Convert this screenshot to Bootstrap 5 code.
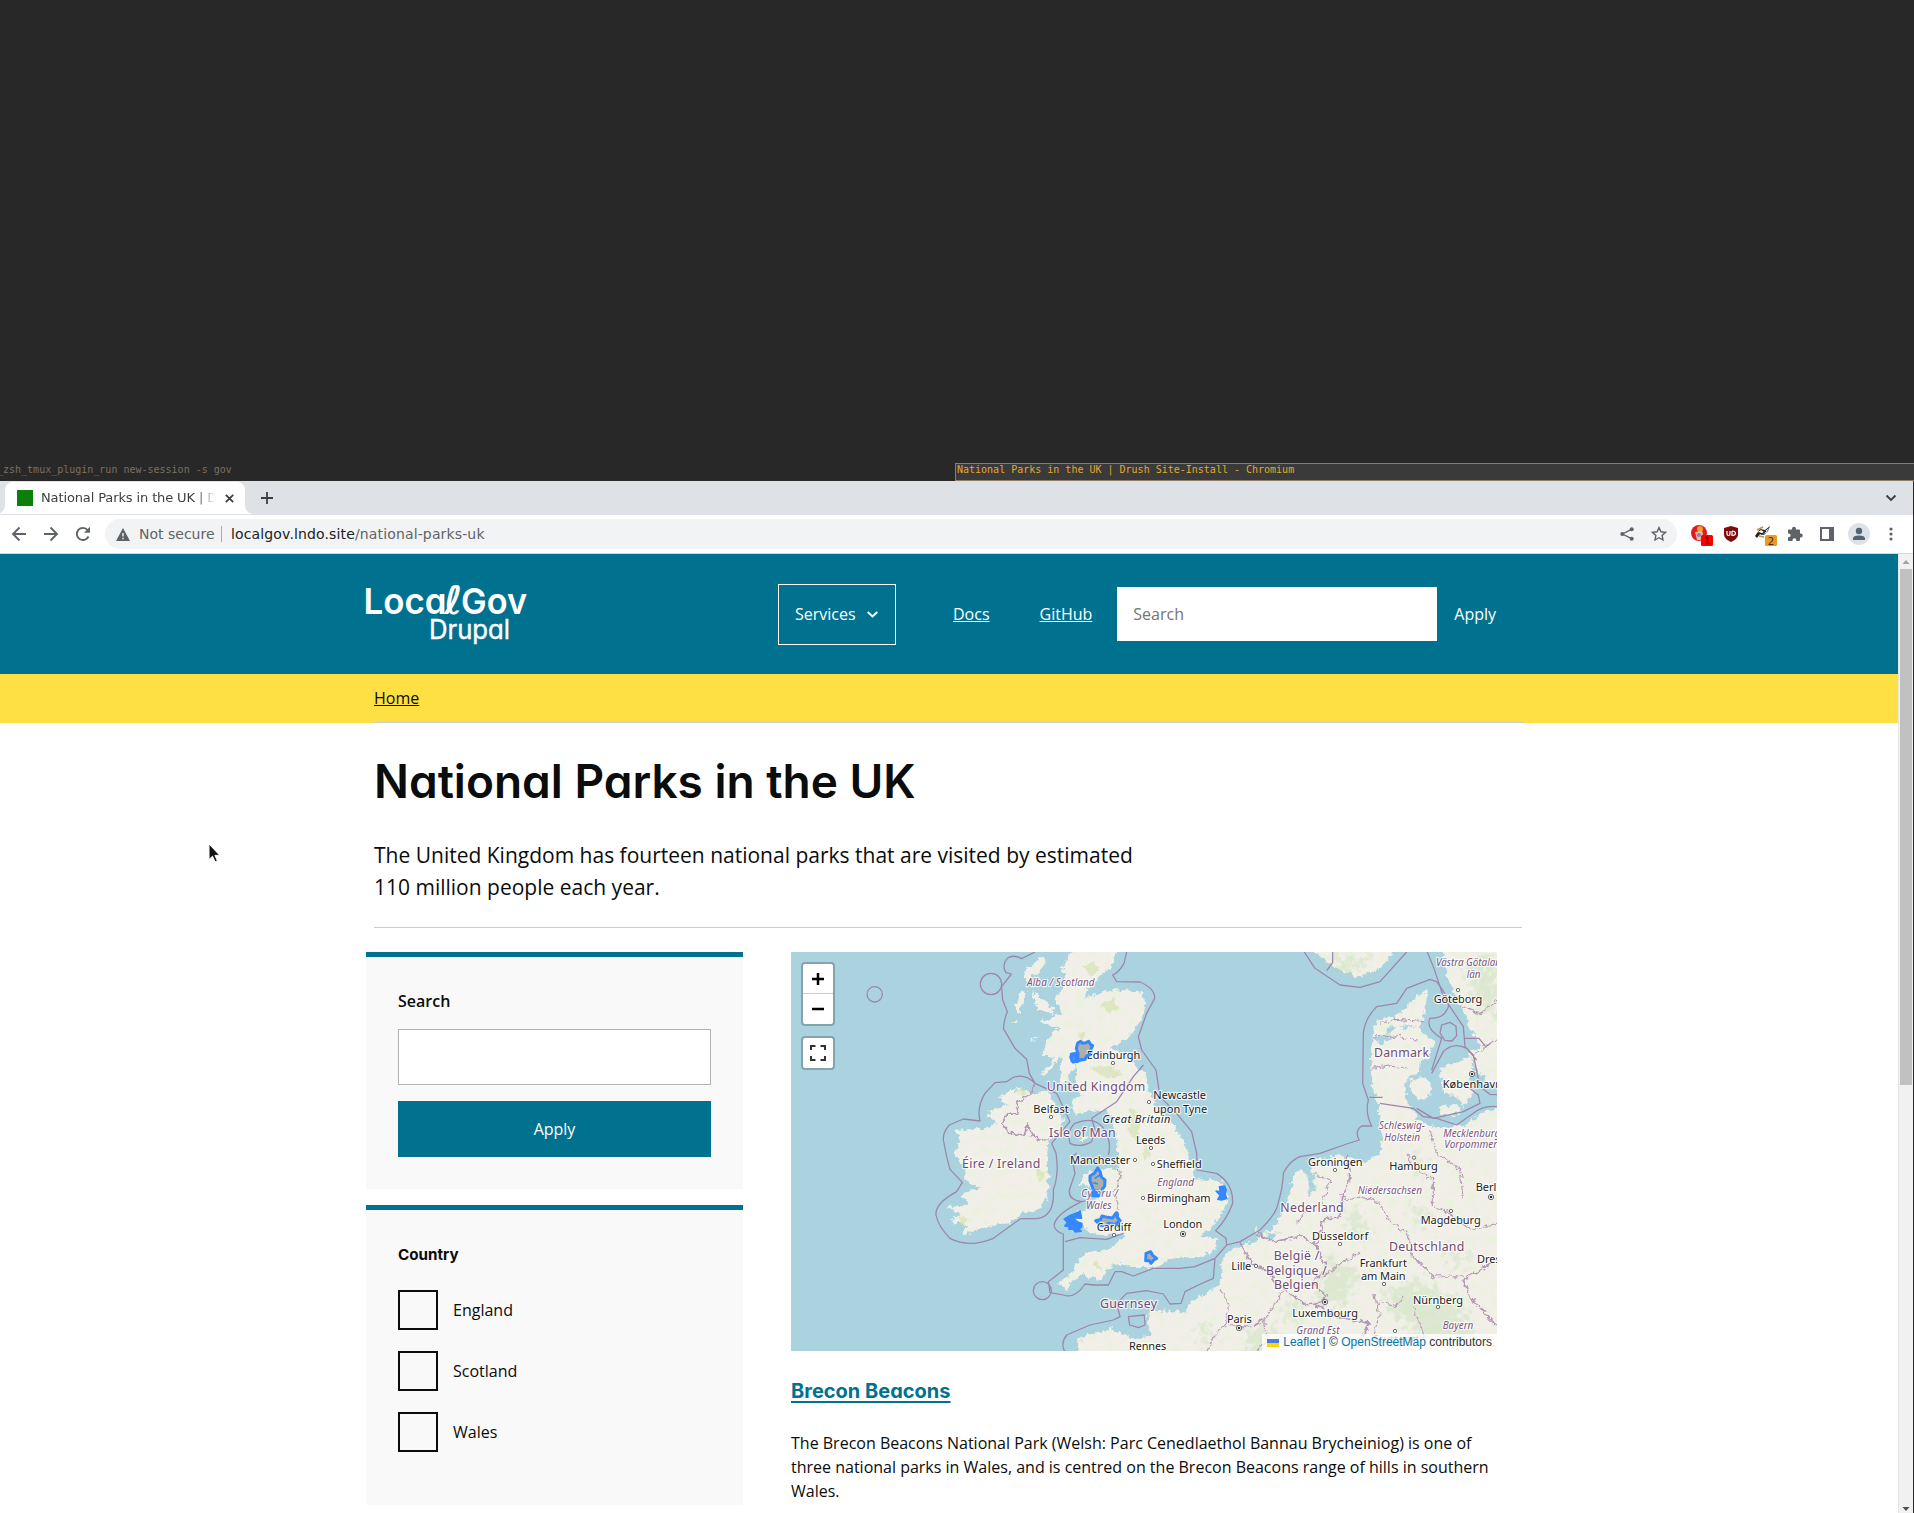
<!DOCTYPE html>
<html lang="en">
<head>
<meta charset="utf-8">
<title>National Parks in the UK | Drush Site-Install</title>
<link href="https://cdn.jsdelivr.net/npm/bootstrap@5.3.0/dist/css/bootstrap.min.css" rel="stylesheet">
<style>
:root{--teal:#00728f}
body{width:1914px;height:1513px;overflow:hidden;background:#282828;font-family:"Open Sans",sans-serif;font-size:16px;line-height:24px;color:#0b0c0c}
svg{display:block;flex:none}
.wm{height:481px;padding-top:463px;font:10px/16px "DejaVu Sans Mono",monospace;color:#7c6f64}
.wm-left{width:955px;height:18px;line-height:14px;text-indent:-3px}
.wm-title{height:18px;background:#3a3a3a;border:1px solid #8f7d6c;border-right:0;color:#e2a92e;line-height:12px;padding-left:1px}
.win{width:1913px;height:1032px;background:#fff}
.tabs{height:34px;background:#dee1e6;font:13px/34px "DejaVu Sans",sans-serif}
.tab-on{width:240px;margin-left:5px;background:#fff;border-radius:8px 8px 0 0;padding:0 11px 0 12px;color:#3c4043;position:relative}
.tab-on:before,.tab-on:after{content:"";position:absolute;bottom:0;width:8px;height:8px}
.tab-on:before{left:-8px;background:radial-gradient(circle at 0 0,transparent 7.5px,#fff 8px)}
.tab-on:after{right:-8px;background:radial-gradient(circle at 100% 0,transparent 7.5px,#fff 8px)}
.fav{width:16px;height:16px;background:#0a800a}
.tab-text{width:176px;height:32px;line-height:32px;margin-left:8px;font-size:13px;overflow:hidden;white-space:nowrap;letter-spacing:-.12px;-webkit-mask-image:linear-gradient(90deg,#000 155px,transparent 175px)}
.bar{height:39px;border-bottom:1px solid #d5d8dc;color:#5f6368;font:14px/30px "DejaVu Sans",sans-serif;padding-left:11px}
.omni{width:1572px;height:30px;border-radius:15px;background:#f1f3f4;margin-left:14px;padding:0 10px 0 11px}
.omni .host{color:#202124}
.top{height:120px;background:var(--teal);color:#fff}
.logo{width:160px;height:62px;margin-left:366px;overflow:visible}
.svc{width:118px;height:61px;border:1px solid #fff;margin-left:252px;padding:0 17px 0 16px}
.top a{color:#fff}
.q{width:320px;height:54px;border:0;border-radius:0;padding:0 16px;margin-left:25px}
.q::placeholder{color:#757575;opacity:1}
.crumb{height:49px;background:#ffe044;padding:12px 0 0 374px}
.crumb a{color:#0b0c0c}
.crumb div{width:1149px;height:37px;border-bottom:1px solid #cdcdc8}
.inner{width:1148px;margin-left:374px}
h1{font:600 46px/58px Inter,sans-serif;font-feature-settings:"cv11";margin:0}
.lede{font-size:21px;line-height:32px;margin:0}
.side{width:377px;margin-left:366px}
.facet{background:#f9f9f9;border-top:5px solid var(--teal);padding:32px}
.lab{font-weight:600}
.lab2{font:700 15.2px/24px Inter,sans-serif;font-feature-settings:"cv11"}
.inp{height:56px;border:1px solid #b1b4b6;border-radius:0}
.go{height:56px;border:0;border-radius:0;background:var(--teal);color:#fff}
.chk{width:40px;height:40px;border:2px solid #0b0c0c}
.res{width:706px;margin-left:48px}
.mapbox{height:399px;position:relative;overflow:hidden;background:#aad3df}
.ctl{position:absolute;left:10px;border:2px solid #83a4ad;border-radius:4px;background:#fff;width:34px}
.ctl svg{margin:auto}
.attr{position:absolute;right:0;bottom:0;height:17px;padding:0 5px;background:rgba(255,255,255,.8);font:12px/16.8px "Liberation Sans",sans-serif;color:#333}
.attr a{color:#0078a8;text-decoration:none}
h2{font:700 20px/28px Inter,sans-serif;font-feature-settings:"cv11";margin:0}
h2 a{color:var(--teal);text-decoration-thickness:2px;text-underline-offset:3px}
.sb{width:15px;background:#f1f1f1;border-left:1px solid #e6e6e6}
.ptr{position:absolute;left:208px;top:843px}
.t text{font-family:"Noto Sans",sans-serif;paint-order:stroke;stroke:#fff;stroke-opacity:.75;stroke-width:7px;stroke-linejoin:round}
.city{fill:#222;font-size:33px}.land{fill:#734a74;font-size:37px}.reg{fill:#7d5580;font-size:30px;font-style:italic}
</style>
<script src="https://cdn.jsdelivr.net/npm/bootstrap@5.3.0/dist/js/bootstrap.bundle.min.js"></script>
</head>
<body>
<div class="wm d-flex"><div class="wm-left">_zsh_tmux_plugin_run new-session -s gov</div><div class="wm-title flex-grow-1">National Parks in the UK | Drush Site-Install - Chromium</div></div>
<div class="win d-flex flex-column">
<div class="tabs d-flex align-items-center">
  <div class="tab-on d-flex align-items-center"><div class="fav"></div><div class="tab-text">National Parks in the UK | Drush</div>
    <svg class="ms-auto" width="9" height="9" viewBox="0 0 9 9" stroke="#3c4043" stroke-width="1.8"><path d="M.8.8l7.4 7.4M8.2.8L.8 8.2"/></svg></div>
  <svg class="ms-3" width="12" height="12" viewBox="0 0 12 12" stroke="#3c4043" stroke-width="1.8"><path d="M6 0v12M0 6h12"/></svg>
  <svg class="ms-auto me-3" width="12" height="8" viewBox="0 0 12 8" fill="none" stroke="#3c4043" stroke-width="1.9"><path d="M1.5 1.5L6 6l4.500-4.500"/></svg>
</div>
<div class="bar d-flex align-items-center">
  <svg width="16" height="16" viewBox="0 0 16 16" fill="none" stroke="#5f6368" stroke-width="1.9"><path d="M15 8H2.500M8.500 1.500L2 8l6.500 6.500"/></svg>
  <svg style="margin-left:16px" width="16" height="16" viewBox="0 0 16 16" fill="none" stroke="#5f6368" stroke-width="1.9"><path d="M1 8h12.500M7.500 1.500L14 8l-6.500 6.500"/></svg>
  <svg style="margin-left:16px" width="16" height="16" viewBox="0 0 16 16" fill="none" stroke="#5f6368" stroke-width="1.9"><path d="M13.500 10.500A6.100 6.100 0 1 1 12.600 4L14 5.500"/><path d="M15 .8v6H9z" fill="#5f6368" stroke="none"/></svg>
  <div class="omni d-flex align-items-center">
    <svg width="14" height="13" viewBox="0 0 14 13"><path d="M7 0l7 13H0z" fill="#5f6368"/><path d="M7 5v3.500M7 9.700v1.500" stroke="#f1f3f4" stroke-width="1.4"/></svg>
    <span style="margin-left:9px;width:82px">Not secure</span><span style="width:1px;height:16px;background:#a9adb1;margin-right:9px"></span>
    <span style="letter-spacing:.14px"><span class="host">localgov.lndo.site</span>/national-parks-uk</span>
    <svg class="ms-auto" width="14" height="14" viewBox="0 0 14 14"><path d="M12 2.200L2.500 7l9.500 4.800" fill="none" stroke="#5f6368" stroke-width="1.400"/><circle cx="11.700" cy="2.200" r="2" fill="#5f6368"/><circle cx="2.300" cy="7" r="2" fill="#5f6368"/><circle cx="11.700" cy="11.800" r="2" fill="#5f6368"/></svg>
    <svg style="margin-left:17px" width="16" height="16" viewBox="0 0 16 16" fill="none" stroke="#5f6368" stroke-width="1.400"><path d="M8 1.600l1.900 4.200 4.600.5-3.400 3.100.9 4.600L8 11.700 4 14l.9-4.600L1.500 6.300l4.600-.5z"/></svg>
  </div>
  <svg style="margin-left:13px" width="24" height="24" viewBox="0 0 24 24"><circle cx="9" cy="11" r="8" fill="#e31b1b"/><circle cx="10" cy="7" r="3" fill="#e9a23a"/><path d="M5 10l7-1 1 3-2 6H7z" fill="#f0b5a8"/><circle cx="9" cy="13" r="2" fill="#8a7fa8"/><rect x="11" y="13" width="12" height="11" rx="1.500" fill="#f00"/><path d="M15.500 15.500h2v6m-2 0h4" stroke="#600" stroke-width="1.400" fill="none"/></svg>
  <svg style="margin-left:9px" width="16" height="16" viewBox="0 0 16 16"><path d="M8 0l7 2v6c0 4-3 6-7 8-4-2-7-4-7-8V2z" fill="#800b0b"/><path d="M4 5v3q0 1.500 1.500 1.500T7 8V5m2 0v4.500q3.500 0 3.500-2.200T9 5" fill="none" stroke="#fff" stroke-width="1.200"/></svg>
  <svg style="margin-left:15px" width="24" height="24" viewBox="0 0 24 24"><path d="M1 14L6 7l5 1 5-4-2 5-4 4-4-1-3 4z" fill="#222"/><path d="M4 10l3-2 3 2 5-4-3 5-3 1z" fill="#fff"/><path d="M5 11l3 1 4-3" stroke="#222" stroke-width="1.500" fill="none"/><path d="M3 8l6-3M5 14l5 1" stroke="#c58a4c" stroke-width="1.500"/><rect x="11" y="13" width="12" height="11" rx="1.500" fill="#e99a24"/><text x="17" y="22.500" text-anchor="middle" font-size="10" fill="#4a2b00">2</text></svg>
  <svg style="margin-left:9px" width="16" height="16" viewBox="0 0 16 16" fill="#5f6368"><path d="M1 4.500q0-1 1-1h3V2.800a2 2 0 0 1 4 0v.7h3q1 0 1 1v3h.8a1.900 1.900 0 0 1 0 3.900H13V14q0 1-1 1H9.300v-.8a1.900 1.900 0 0 0-3.800 0v.8H2q-1 0-1-1v-2.800h.7a1.900 1.900 0 0 0 0-3.800H1z"/></svg>
  <svg style="margin-left:17px" width="14" height="14" viewBox="0 0 14 14"><path d="M1 1h12v12H1z" fill="#fff" stroke="#5f6368" stroke-width="2"/><path d="M9 1h4v12H9z" fill="#5f6368"/></svg>
  <svg style="margin-left:14px" width="22" height="22" viewBox="0 0 22 22"><circle cx="11" cy="11" r="11" fill="#dee1e6"/><circle cx="11" cy="8" r="3.200" fill="#4f6474"/><path d="M5 17v-1.500q0-3 6-3t6 3V17z" fill="#4f6474"/></svg>
  <svg style="margin-left:19px" width="4" height="14" viewBox="0 0 4 14" fill="#5f6368"><circle cx="2" cy="2" r="1.600"/><circle cx="2" cy="7" r="1.600"/><circle cx="2" cy="12" r="1.600"/></svg>
</div>
<div class="d-flex flex-grow-1 overflow-hidden">
<div class="flex-grow-1">
  <header class="top d-flex align-items-center">
    <svg class="logo" viewBox="0 0 160 62" fill="#fff" font-family="Inter,sans-serif" style="font-feature-settings:'cv11'"><text y="30.500" font-size="35.500" font-weight="600"><tspan x="-2.500" textLength="83" lengthAdjust="spacingAndGlyphs">Loca</tspan><tspan x="78" font-family="DejaVu Sans" font-weight="700" font-size="39">ℓ</tspan><tspan x="95" textLength="66" lengthAdjust="spacingAndGlyphs">Gov</tspan></text><text x="63" y="55.500" font-size="26.500" font-weight="400" stroke="#fff" stroke-width=".4" textLength="81" lengthAdjust="spacingAndGlyphs">Drupal</text></svg>
    <div class="svc d-flex align-items-center justify-content-between"><span>Services</span><svg width="11" height="7" viewBox="0 0 11 7" fill="none" stroke="#fff" stroke-width="2"><path d="M.7 1l4.800 4.500L10.300 1"/></svg></div>
    <a href="#" style="margin-left:57px">Docs</a><a href="#" style="margin-left:50px">GitHub</a>
    <input class="q" placeholder="Search"><span style="margin-left:17px">Apply</span>
  </header>
  <nav class="crumb"><div><a href="#">Home</a></div></nav>
  <div class="inner">
    <h1 style="padding-top:29px">National Parks in the UK</h1>
    <p class="lede" style="padding-top:29px">The United Kingdom has fourteen national parks that are visited by estimated<br>110 million people each year.</p>
    <div style="height:25px;border-bottom:1px solid #ccc"></div>
  </div>
  <div class="d-flex" style="padding-top:24px">
    <aside class="side">
      <div class="facet" style="height:237px"><div class="lab">Search</div><input class="inp w-100 d-block" style="margin-top:16px"><button class="go w-100 d-block" style="margin-top:16px">Apply</button></div>
      <div class="facet" style="height:300px;margin-top:16px"><div class="lab2" style="padding-top:1px">Country</div>
        <div class="d-flex align-items-center" style="margin-top:23px"><span class="chk"></span><span style="margin-left:15px">England</span></div>
        <div class="d-flex align-items-center" style="margin-top:21px"><span class="chk"></span><span style="margin-left:15px">Scotland</span></div>
        <div class="d-flex align-items-center" style="margin-top:21px"><span class="chk"></span><span style="margin-left:15px">Wales</span></div>
      </div>
    </aside>
    <main class="res">
      <div class="mapbox">
<svg width="706" height="400" viewBox="33 36 2118 1200">
<defs>
<filter id="rough" x="0" y="0" width="100%" height="100%">
<feTurbulence type="fractalNoise" baseFrequency=".06" numOctaves="4" seed="4" result="n"/>
<feDisplacementMap in="SourceGraphic" in2="n" scale="26" xChannelSelector="R" yChannelSelector="G" result="l"/>
<feTurbulence type="fractalNoise" baseFrequency=".045" numOctaves="5" seed="11" result="m"/>
<feColorMatrix in="m" values="0 0 0 0 .82  0 0 0 0 .89  0 0 0 0 .72  4.500 0 0 0 -2.250" result="g"/>
<feComposite in="g" in2="l" operator="in" result="gl"/><feMerge><feMergeNode in="l"/><feMergeNode in="gl"/></feMerge></filter>
<filter id="wob"><feTurbulence type="fractalNoise" baseFrequency=".06" numOctaves="3" seed="7"/><feDisplacementMap in="SourceGraphic" scale="22" xChannelSelector="R" yChannelSelector="G"/></filter>
<filter id="soft" x="-10%" y="-10%" width="120%" height="120%"><feTurbulence type="fractalNoise" baseFrequency=".05" numOctaves="4" seed="9" result="n"/><feGaussianBlur in="SourceGraphic" stdDeviation="9" result="b"/><feDisplacementMap in="b" in2="n" scale="110" xChannelSelector="R" yChannelSelector="G"/></filter>
</defs>
<rect x="33" y="36" width="2118" height="1200" fill="#aad3df"/>
<g filter="url(#rough)" fill="#f2efe9">
<rect x="33" y="36" width="2118" height="1200" fill="none"/>
<path d="M875 30H1008L1000 75 965 105 925 145 912 175 960 160 1000 148 1085 155 1095 185 1085 235 1055 278 1020 310 985 322 1035 345 1060 372 1098 398 1108 455 1138 515 1195 570 1225 645 1243 690 1236 726 1262 718 1325 725 1345 765 1328 820 1290 868 1258 884 1316 896 1308 925 1265 952 1165 960 1130 982 1055 980 1020 968 985 985 962 1022 905 1002 882 1020 862 1048 830 1030 868 1008 908 945 1000 922 1035 880 965 888 920 872 905 845 858 843 905 812 948 792 935 735 895 738 922 700 960 690 1012 685 1015 600 1000 560 1000 535 975 510 930 512 885 525 872 485 905 465 888 425 892 378 868 400 845 440 838 400 845 345 805 400 778 408 825 352 788 345 800 300 838 262 788 248 845 215 822 180 858 130 845 80z"/>
<path d="M715 442L752 460 805 458 848 535 838 580 800 605 806 690 800 780 785 806 722 820 685 850 602 865 550 888 558 856 508 842 542 820 503 805 560 790 545 762 600 742 552 722 562 682 522 650 540 605 530 570 602 566 652 552 618 522 682 492 648 474z"/>
<path d="M795 45L798 75 740 125 732 90zM722 150L738 158 715 225 706 200zM757 155L830 210 815 222 770 205zM765 300L785 285 742 308zM848 395L870 402 862 428zM775 240l18-4-2 12zM700 245l14-10-8 18zM922 698l30-8 4 22-30 8zM898 598l20-14 6 4-20 18z"/>
<path d="M890 1240L892 1200 942 1178 1000 1168 1058 1195 1112 1188 1100 1130 1110 1112 1222 1118 1230 1085 1280 1060 1322 1035 1325 960 1350 932 1392 918 1450 890 1490 850 1530 762 1542 700 1572 690 1590 730 1600 660 1680 645 1750 668 1800 640 1808 590 1795 500 1778 440 1773 330 1775 285 1790 240 1862 222 1900 178 1942 148 1935 220 1918 272 1962 302 1950 345 1918 370 1916 395 1878 420 1882 490 1905 512 1912 542 1970 562 2050 558 2110 515 2160 503V1240z"/>
<path d="M1985 30L2002 110 2040 190 2072 270 2105 316 2066 338 2098 400 2125 432 2160 440V30zM1600 30L1662 80 1730 110 1800 88 1845 30zM1885 420L1930 410 1955 430 1952 465 1920 478 1892 455zM1978 385L2030 370 2070 350 2085 395 2065 415 2080 450 2050 500 2030 470 1990 460zM1970 500L2030 495 2050 510 2020 528 1980 520zM1450 872l50 5-12 14-40-4z"/>
<path fill="#aad3df" d="M1780 292l30-6 20-34 14 8-14 26 20 10-30 4-20 12zM1850 252l22 8 40-4-38 12zM1425 865l50 16 30-4-34 20-40-4zM1592 700l22 18-6 34-20 20-4-40z"/>
</g>
<g filter="url(#wob)" fill="#cddf9f" opacity=".5"><path d="M910 80l30-14 18 20-30 22zM960 195l40-20 20 30-40 12zM890 285l30-12-10 22zM930 380l60-4 40 30-50 10zM1050 500l30 30-10 80-25-40zM1090 590l20 50-20 20zM710 450l25-5-5 30zM770 680l30 15-20 35zM535 825l28 12-14 25zM940 970l20-10 2 40z"/></g>
<g filter="url(#soft)" fill="#b5d9a5" opacity=".33"><path d="M1650 50l130-6-40 50-60-5zM2060 50l90 10v190l-60-60zM1650 950l90 60-60 90-80-20zM1800 1060l120-40 100 60 80 120-160 20zM1880 790l70 30-40 40zM1700 780l80 100-70 20zM1400 1180l60-30 80 80h-140zM1500 1080l70 20-30 60zM1880 640l60 20-20 60zM2000 900l80 60-60 20zM1250 1150l60 20-30 50z"/></g>
<g fill="none" stroke="#9c86ab" stroke-width="3.800" stroke-linejoin="round">
<circle cx="284" cy="163" r="23"/><circle cx="633" cy="132" r="32"/><circle cx="787" cy="1052" r="27"/><path d="M1985 255l25-8 18 12 2 28-14 16-22-2-14-22z"/>
<path d="M765 36L725 56Q700 42 682 55 664 75 678 98L694 102 665 140 668 180 682 215Q672 240 670 265L705 325 740 358 748 400 765 430Q735 400 700 412L680 425 645 428 615 460Q590 500 600 543L550 537 508 555Q488 578 490 600L500 650 510 688 547 727 530 755Q465 790 468 825 475 860 510 895 568 925 640 895L722 836 770 836Q825 830 820 750 838 700 828 640L815 610"/>
<path d="M1040 36L1032 70Q1018 96 998 105L1010 125 1080 126Q1125 145 1124 175L1100 220 1075 290 1085 330 1128 390 1140 470 1190 520 1235 575 1250 640 1252 690 1310 700Q1360 730 1358 790 1340 840 1307 872L1338 895 1340 915 1380 905 1440 870Q1480 830 1490 805 1510 740 1510 700 1530 660 1560 650L1620 640 1700 612 1738 600Q1722 575 1745 558L1775 558Q1755 520 1765 480L1748 430 1750 280Q1755 235 1790 200L1850 190 1880 145 1950 118 1970 125Q2020 190 2000 210 1990 235 1950 235 1935 265 1985 295L1955 390"/>
<path d="M1340 915L1305 955 1300 1015 1255 1035 1215 1055 1203 1090 1170 1092 1150 1062 1100 1052 1040 1060 1010 1090 1020 1130 1000 1140 930 1155 860 1185Q840 1210 855 1236M1305 955L1245 980 1200 985 1120 985 1060 1008 1025 995 1005 995 985 1035 940 1035 915 1032Q885 1078 850 1065L810 1058 805 1025 850 990V882Q825 875 822 855 830 820 905 785L928 780M905 785Q865 780 868 750L885 700 875 650 890 640M985 645Q995 610 975 570 945 525 885 550 860 570 870 610 900 625 935 605L945 570 935 535 1010 485 1060 410 1090 375M765 430L830 460 870 545M870 545L815 610M855 905L900 893 980 898 1030 880M1045 1130l48-5 2 30-20 8-26-8zM1573 36L1605 85 1680 135 1740 142 1800 125 1880 36M1942 36L1960 80 1990 170 2050 260 2055 320 2080 345 2100 440 2130 463 2151 464M1955 400L1990 335Q2020 305 2060 325L2090 360M1800 490L1900 505 1930 530 1970 535 2030 555 2080 520Q2110 495 2151 500M1910 505L1960 535 2050 515 2100 490 2095 465 2050 430M1640 92l18-24V36M2055 295h42l20 25 15 -10M1768 472h40"/>
</g>
<g fill="none" stroke="#b497b5" stroke-width="3.200" filter="url(#wob)">
<path stroke-width="5" d="M765 432L755 460 715 485 710 520 680 525 665 550 690 580 735 585 740 555 765 595 800 600M1380 905L1395 940 1420 975 1465 990 1480 1020 1530 1060 1580 1095 1620 1090 1640 1070 1600 1030 1640 980 1610 920 1630 840 1680 830 1690 760 1710 720 1700 640M1430 880L1480 905 1560 890 1600 910 1625 950M1600 1090L1670 1130 1770 1150 1740 1200 1700 1236M2151 960L2100 990 2050 1020 2070 1070 2151 1160"/>
<path d="M1775 385L1830 378 1880 385M1800 250L1850 238 1935 245M1775 290L1850 288 1910 300M1015 680L1020 720 1000 760 1015 810M1320 1045L1345 1090 1340 1150 1300 1190 1280 1236M1345 1160L1420 1160 1460 1130 1510 1050M1450 1140L1460 1200 1430 1236M1700 780L1750 770 1800 790 1820 830 1840 850 1880 880 1900 950 1960 1010 2050 1010M1880 640L1900 680 1960 720 1960 800 2010 820 2080 870 2151 850M1950 570L1970 640 2040 690 2050 780M1780 1060L1800 1120 1780 1180 1800 1236M1900 1100L1930 1180 1920 1236M1550 850L1570 820 1620 800 1650 720 1600 700M1625 1010L1700 960 1740 940M1700 780L1680 760M2040 200L2100 220 2151 180M2110 316L2151 300M2080 345L2120 320M1790 1080l60 20 20-30"/>
</g>
<g stroke="#3388ff" stroke-width="9" stroke-linejoin="round" fill="#adb0aa">
<path d="M893 309L902 304 908 310 918 308 926 304 932 314 938 317 933 327 934 342 922 347 914 358 900 360 890 364 876 363 872 350 884 344 893 338 889 325z"/><path d="M874 343l20-4 0 25-15 2z" fill="#3388ff"/><path d="M880 350l2 10" stroke="#adb0aa" stroke-width="2"/>
<path d="M953 684L960 694 965 712 975 720 974 738 967 748 966 760 955 768 938 768 941 752 936 738 930 722 930 708 943 700z"/><path d="M944 715l16-10M940 728l14 4M946 750l10 2v12h-14z" fill="#3388ff" stroke-width="5"/>
<path d="M947 842L962 838 966 828 982 832 998 834 1004 824 1010 818 1012 832 1020 842 1010 850 1012 858 998 852 985 850 978 858 962 856z"/>
<g fill="#3388ff" stroke-width="4"><path d="M852 837L870 826 886 820 901 813 905 835 888 834 876 830 892 845 906 850 905 862 896 866 904 874 885 876 880 868 866 868 868 860 854 858 862 848zM1308 753L1320 755 1318 740 1334 738 1339 750 1336 762 1340 776 1325 780 1313 778 1320 766z" transform="translate(0 0)"/></g>
<path d="M1098 940L1112 935 1118 946 1130 955 1121 960 1113 970 1108 962 1097 962z"/></g>
<g class="t">
<g class="city">
<text x="920" y="357" textLength="161">Edinburgh</text><text x="760" y="518" textLength="106">Belfast</text><text x="870" y="672" textLength="181">Manchester</text><text x="950" y="873" textLength="103">Cardiff</text>
<text x="1120" y="478" textLength="158">Newcastle</text><text x="1120" y="519" textLength="162">upon Tyne</text><text x="1068" y="612" textLength="88">Leeds</text><text x="1130" y="684" textLength="135">Sheffield</text><text x="1101" y="786" textLength="191">Birmingham</text><text x="1150" y="864" textLength="117">London</text>
<text x="1354" y="990" textLength="60">Lille</text><text x="1341" y="1148" textLength="74">Paris</text><text x="1047" y="1230" textLength="112">Rennes</text><text x="1537" y="1130" textLength="197">Luxembourg</text><text x="1584" y="678" textLength="164">Groningen</text><text x="1828" y="690" textLength="145">Hamburg</text><text x="2087" y="752">Berlin</text><text x="1922" y="851" textLength="180">Magdeburg</text><text x="1596" y="901" textLength="169">Düsseldorf</text><text x="1739" y="980" textLength="142">Frankfurt</text><text x="1743" y="1021" textLength="134">am Main</text><text x="1899" y="1092" textLength="150">Nürnberg</text><text x="2091" y="970">Dresden</text><text x="1961" y="188" textLength="146">Göteborg</text><text x="1988" y="444" textLength="178">København</text><text x="1780" y="1208">Stuttgart</text>
<text x="967" y="550" textLength="204" font-style="italic">Great Britain</text></g>
<g class="land"><text x="800" y="453" textLength="296">United Kingdom</text><text x="807" y="591" textLength="200">Isle of Man</text><text x="546" y="684" textLength="235">Éire / Ireland</text><text x="960" y="1104" textLength="171">Guernsey</text><text x="1782" y="351" textLength="165">Danmark</text><text x="1501" y="815" textLength="190">Nederland</text><text x="1481" y="959" textLength="137">België /</text><text x="1458" y="1004" textLength="182">Belgique /</text><text x="1482" y="1048" textLength="134">Belgien</text><text x="1827" y="932" textLength="226">Deutschland</text></g>
<g class="reg"><text x="741" y="137" textLength="203">Alba / Scotland</text><text x="904" y="772" textLength="110">Cymru /</text><text x="918" y="807" textLength="77">Wales</text><text x="1132" y="738" textLength="110">England</text><text x="1968" y="78" textLength="225">Västra Götalands</text><text x="2060" y="113" textLength="42">län</text><text x="1797" y="567" textLength="138">Schleswig-</text><text x="1813" y="602" textLength="107">Holstein</text><text x="1990" y="590" textLength="180">Mecklenburg-</text><text x="1993" y="625">Vorpommern</text><text x="1733" y="763" textLength="193">Niedersachsen</text><text x="1549" y="1181" textLength="130">Grand Est</text><text x="1988" y="1167" textLength="92">Bayern</text></g></g>
<g fill="none" stroke="#3388ff" stroke-width="9" stroke-linejoin="round"><path d="M934 342L922 347 914 358 900 360M938 768L941 752 955 768zM1012 818L1012 832 1020 842 1010 850 1012 858"/></g>
<g fill="#fff" stroke="#555" stroke-width="2.500"><circle cx="999" cy="369" r="5"/><circle cx="813" cy="531" r="5"/><circle cx="1107" cy="486" r="5"/><circle cx="1113" cy="624" r="5"/><circle cx="1065" cy="660" r="5"/><circle cx="1119" cy="672" r="5"/><circle cx="1089" cy="774" r="5"/><circle cx="1002" cy="885" r="5"/><circle cx="1428" cy="978" r="5"/><circle cx="1665" cy="690" r="5"/><circle cx="1902" cy="653" r="5"/><circle cx="2013" cy="813" r="5"/><circle cx="1680" cy="912" r="5"/><circle cx="1812" cy="1032" r="5"/><circle cx="1974" cy="1101" r="5"/><circle cx="2034" cy="150" r="5"/><circle cx="1845" cy="1173" r="5"/>
<circle cx="1209" cy="882" r="8"/><circle cx="1377" cy="1164" r="8"/><circle cx="1635" cy="1086" r="8"/><circle cx="2076" cy="402" r="8"/><circle cx="2133" cy="771" r="8"/></g>
<g fill="#333"><circle cx="1209" cy="882" r="4"/><circle cx="1377" cy="1164" r="4"/><circle cx="1635" cy="1086" r="4"/><circle cx="2076" cy="402" r="4"/><circle cx="2133" cy="771" r="4"/></g>
</svg>
        <div class="ctl" style="top:10px;height:64px"><svg width="30" height="60" viewBox="0 0 30 60"><path d="M0 29.500h30" stroke="#ccc"/><path d="M15 9v12M9 15h12M9 45h12" stroke="#000" stroke-width="2.500"/></svg></div>
        <div class="ctl" style="top:84px;height:34px"><svg width="30" height="30" viewBox="0 0 30 30" fill="none" stroke="#333" stroke-width="2"><path d="M8 12V8h4.500M17.500 8H22v4M22 18v4h-4.500M12.500 22H8v-4"/></svg></div>
        <div class="attr d-flex align-items-center"><svg class="me-1" width="12" height="8"><path d="M0 0h12v4H0z" fill="#4c7be1"/><path d="M0 4h12v4H0z" fill="#ffd500"/></svg><span><a href="#">Leaflet</a> | © <a href="#">OpenStreetMap</a> contributors</span></div>
      </div>
      <h2 style="padding-top:26px"><a href="#">Brecon Beacons</a></h2>
      <p style="margin:26px -6px 0 0">The Brecon Beacons National Park (Welsh: Parc Cenedlaethol Bannau Brycheiniog) is one of<br>three national parks in Wales, and is centred on the Brecon Beacons range of hills in southern<br>Wales.</p>
    </main>
  </div>
</div>
<div class="sb"><svg width="14" height="959" viewBox="0 0 14 959"><path d="M3.500 10h7L7 6z" fill="#a3a3a3"/><path d="M1 15h12v516H1z" fill="#c1c1c1"/><path d="M3.500 953h7L7 957z" fill="#505050"/></svg></div>
</div>
</div>
<svg class="ptr" width="13" height="20" viewBox="0 0 13 20"><path d="M1 1v15.500l3.500-3.300 2.600 5.600 2.300-1-2.500-5.400h4.900z" fill="#111" stroke="#fff"/></svg>
</body>
</html>
